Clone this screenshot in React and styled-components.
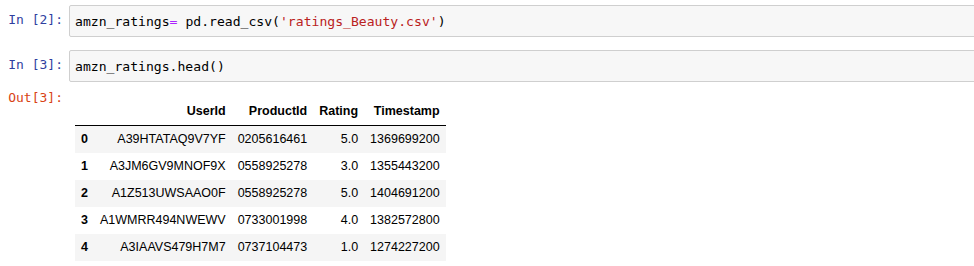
import React from "react";
import styled, { createGlobalStyle } from "styled-components";

const GlobalStyle = createGlobalStyle`
  html, body {
    margin: 0;
    padding: 0;
    background: #fff;
    overflow: hidden;
  }
`;

const rows = [
  ["0", "A39HTATAQ9V7YF", "0205616461", "5.0", "1369699200"],
  ["1", "A3JM6GV9MNOF9X", "0558925278", "3.0", "1355443200"],
  ["2", "A1Z513UWSAAO0F", "0558925278", "5.0", "1404691200"],
  ["3", "A1WMRR494NWEWV", "0733001998", "4.0", "1382572800"],
  ["4", "A3IAAVS479H7M7", "0737104473", "1.0", "1274227200"],
];

const App = () => {
  return (
    <Notebook>
      <GlobalStyle />
      <Cell>
        <Prompt>In [2]:</Prompt>
        <InputArea>
          <Code>
            amzn_ratings<Op>=</Op> pd.read_csv(<Str>'ratings_Beauty.csv'</Str>)
          </Code>
        </InputArea>
      </Cell>
      <Cell gap="13px">
        <Prompt>In [3]:</Prompt>
        <InputArea>
          <Code>amzn_ratings.head()</Code>
        </InputArea>
      </Cell>
      <OutputCell>
        <Prompt out>Out[3]:</Prompt>
        <OutputArea>
          <DataFrame>
            <thead>
              <tr>
                <th></th>
                <th>UserId</th>
                <th>ProductId</th>
                <th>Rating</th>
                <th>Timestamp</th>
              </tr>
            </thead>
            <tbody>
              {rows.map((r) => (
                <tr key={r[0]}>
                  <th>{r[0]}</th>
                  <td>{r[1]}</td>
                  <td>{r[2]}</td>
                  <td>{r[3]}</td>
                  <td>{r[4]}</td>
                </tr>
              ))}
            </tbody>
          </DataFrame>
        </OutputArea>
      </OutputCell>
    </Notebook>
  );
};

const Notebook = styled.div`
  width: 990px;
  padding-top: 5px;
  display: flex;
  flex-direction: column;
`;

const Cell = styled.div`
  display: flex;
  align-items: stretch;
  margin-top: ${(p) => p.gap || "0"};
`;

const Prompt = styled.div`
  width: 63px;
  flex: none;
  padding-right: 6px;
  text-align: right;
  font-family: "DejaVu Sans Mono", "Liberation Mono", monospace;
  font-size: 13px;
  line-height: 30px;
  color: ${(p) => (p.out ? "#D84315" : "#303F9F")};
`;

const InputArea = styled.div`
  flex: 1;
  height: 30px;
  background: #f7f7f7;
  border: 1px solid #cfcfcf;
  border-radius: 2px;
  display: flex;
  align-items: center;
  padding: 0 5px;
`;

const Code = styled.pre`
  margin: 0;
  font-family: "DejaVu Sans Mono", "Liberation Mono", monospace;
  font-size: 13.1px;
  color: #000;
`;

const Op = styled.span`
  color: #aa22ff;
`;

const Str = styled.span`
  color: #ba2121;
`;

const OutputCell = styled.div`
  display: flex;
  margin-top: 7px;

  ${Prompt} {
    line-height: 17px;
  }
`;

const OutputArea = styled.div`
  padding-top: 9px;
  padding-left: 6px;
`;

const DataFrame = styled.table`
  border-collapse: collapse;
  border: none;
  font-family: "Liberation Sans", Arial, sans-serif;
  font-size: 12.5px;
  color: #000;

  th,
  td {
    padding: 6px 6px;
    text-align: right;
    vertical-align: middle;
    white-space: nowrap;
    line-height: 15px;
  }

  thead th {
    font-weight: bold;
    vertical-align: bottom;
    border-bottom: 1px solid #000;
  }

  tbody th {
    font-weight: bold;
  }

  tbody tr:nth-child(odd) {
    background: #f5f5f5;
  }
`;

export default App;
